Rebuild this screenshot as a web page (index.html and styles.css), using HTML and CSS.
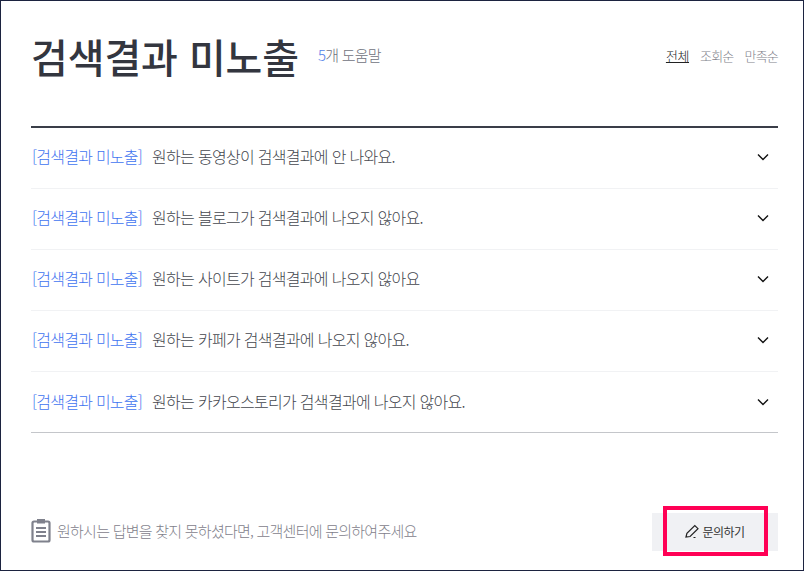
FILE: index.html
```html
<!DOCTYPE html>
<html lang="ko">
<head>
    <meta charset="UTF-8" />
    <title>검색결과 미노출</title>
    <link rel="stylesheet" href="styles.css">
</head>
<body>
<div class="page">
    <header class="head">
        <div class="head-left">
            <h1>검색결과 미노출</h1>
            <span class="count"><em>5</em>개 도움말</span>
        </div>
        <nav class="sort">
            <a class="on">전체</a>
            <a>조회순</a>
            <a>만족순</a>
        </nav>
    </header>

    <ul class="list">
        <li><span class="cate">[검색결과 미노출]</span><span class="q">원하는 동영상이 검색결과에 안 나와요.</span><svg class="arrow" width="12" height="8" viewBox="0 0 12 8"><path d="M1 1.500l5 5 5-5" fill="none" stroke="#111" stroke-width="1.400"/></svg></li>
        <li><span class="cate">[검색결과 미노출]</span><span class="q">원하는 블로그가 검색결과에 나오지 않아요.</span><svg class="arrow" width="12" height="8" viewBox="0 0 12 8"><path d="M1 1.500l5 5 5-5" fill="none" stroke="#111" stroke-width="1.400"/></svg></li>
        <li><span class="cate">[검색결과 미노출]</span><span class="q">원하는 사이트가 검색결과에 나오지 않아요</span><svg class="arrow" width="12" height="8" viewBox="0 0 12 8"><path d="M1 1.500l5 5 5-5" fill="none" stroke="#111" stroke-width="1.400"/></svg></li>
        <li><span class="cate">[검색결과 미노출]</span><span class="q">원하는 카페가 검색결과에 나오지 않아요.</span><svg class="arrow" width="12" height="8" viewBox="0 0 12 8"><path d="M1 1.500l5 5 5-5" fill="none" stroke="#111" stroke-width="1.400"/></svg></li>
        <li><span class="cate">[검색결과 미노출]</span><span class="q">원하는 카카오스토리가 검색결과에 나오지 않아요.</span><svg class="arrow" width="12" height="8" viewBox="0 0 12 8"><path d="M1 1.500l5 5 5-5" fill="none" stroke="#111" stroke-width="1.400"/></svg></li>
    </ul>

    <footer class="foot">
        <p class="notice">
            <svg width="20" height="25" viewBox="0 0 20 25"><path d="M6 3.500H3A1.500 1.500 0 0 0 1.500 5v17A1.500 1.500 0 0 0 3 23.500h14a1.500 1.500 0 0 0 1.500-1.500V5A1.500 1.500 0 0 0 17 3.500h-3" fill="none" stroke="#7f818c" stroke-width="2.200"/><path d="M6 1h8v4.500H6z" fill="#7f818c"/><path d="M5 10h10M5 14h10M5 18h10" stroke="#7f818c" stroke-width="1.800"/></svg>
            원하시는 답변을 찾지 못하셨다면, 고객센터에 문의하여주세요
        </p>
        <a class="btn-ask">
            <svg width="15" height="15" viewBox="0 0 15 15"><path d="M1 13l.9-3.600L9.800 1.500l3.200 3.200-7.900 7.800z" fill="none" stroke="#222" stroke-width="1.200"/><path d="M8.500 13.500h2" stroke="#222" stroke-width="1"/></svg>
            문의하기
        </a>
    </footer>
    <div class="mark"></div>
</div>
</body>
</html>
```

FILE: styles.css
```css
* {
    box-sizing: border-box;
}

html, body {
    margin: 0;
    padding: 0;
}

body {
    font-family: "Noto Sans CJK KR", "Noto Sans", sans-serif;
    background-color: #fff;
}

.page {
    position: relative;
    width: 804px;
    height: 571px;
    padding: 0 25px 0 30px;
    border: 1px solid #1c2340;
    overflow: hidden;
}

.head {
    display: flex;
    justify-content: space-between;
    align-items: center;
    height: 125px;
    padding-bottom: 13px;
}

.head-left {
    display: flex;
    align-items: center;
}

h1 {
    margin: 0 0 2px;
    font-size: 40px;
    font-weight: 500;
    line-height: 60px;
    letter-spacing: -0.1px;
    color: #33363f;
}

.count {
    margin: 0 0 6px 19px;
    font-size: 15px;
    font-weight: 300;
    letter-spacing: -0.8px;
    color: #6f727d;
}

.count em {
    font-style: normal;
    color: #4f7ee8;
}

.sort {
    display: flex;
    gap: 11px;
    margin-bottom: 4px;
    font-size: 13px;
    font-weight: 300;
    letter-spacing: -0.8px;
    color: #7f818b;
}

.sort .on {
    letter-spacing: -0.4px;
    color: #222;
    text-decoration: underline;
}

.list {
    margin: 0;
    padding: 0;
    list-style: none;
    border-top: 2px solid #3a3e48;
    border-bottom: 1px solid #c4c6ca;
}

.list li {
    display: flex;
    align-items: center;
    height: 61px;
    padding-bottom: 4px;
    font-size: 16px;
    font-weight: 300;
    letter-spacing: -0.75px;
    border-bottom: 1px solid #f1f2f4;
}

.list li:last-child {
    height: 60px;
    padding-bottom: 3px;
    border-bottom: 0;
}

.cate {
    margin: 0 10px 0 1px;
    color: #3f74f0;
}

.q {
    flex: 1;
    letter-spacing: -0.7px;
    color: #44474e;
}

.arrow {
    margin: 2px 9px 0 0;
}

.foot {
    display: flex;
    justify-content: space-between;
    align-items: center;
    margin-top: 80px;
}

.notice {
    display: flex;
    align-items: center;
    gap: 6px;
    margin: 0;
    padding-bottom: 4px;
    font-size: 15px;
    font-weight: 300;
    letter-spacing: -0.75px;
    color: #7f818b;
}

.btn-ask {
    display: flex;
    justify-content: center;
    align-items: center;
    gap: 2px;
    width: 126px;
    height: 38px;
    padding-bottom: 2px;
    font-size: 12px;
    letter-spacing: -0.5px;
    color: #333;
    background-color: #f0f1f4;
}

.mark {
    position: absolute;
    left: 662px;
    top: 505px;
    width: 105px;
    height: 50px;
    border: 4px solid #ff0055;
}
```
